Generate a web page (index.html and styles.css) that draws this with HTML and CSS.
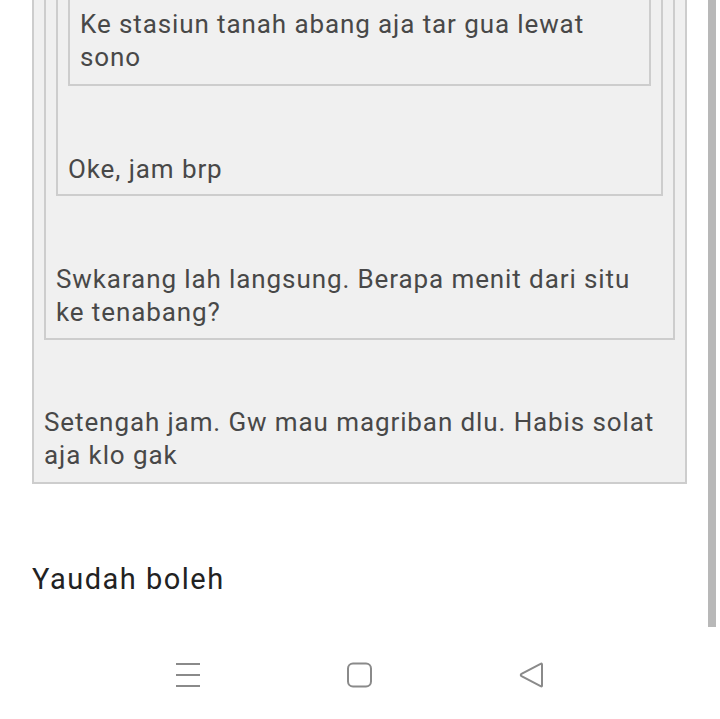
FILE: index.html
```html
<!DOCTYPE html>
<html>
<head>
<meta charset="utf-8">
<link rel="stylesheet" href="styles.css">
</head>
<body>
<div class="screen">
  <div class="viewport">
    <div class="content">
      <div class="quote q1">
        <div class="quote q2">
          <div class="quote q3">
            <div class="quote q4">
              <p class="msg">Ke stasiun tanah abang aja tar gua lewat sono</p>
            </div>
            <p class="msg spaced">Oke, jam brp</p>
          </div>
          <p class="msg spaced">Swkarang lah langsung. Berapa menit dari situ ke tenabang?</p>
        </div>
        <p class="msg spaced">Setengah jam. Gw mau magriban dlu. Habis solat aja klo gak</p>
      </div>
      <p class="reply">Yaudah boleh</p>
    </div>
    <div class="scrollbar"></div>
  </div>
  <nav class="navbar">
    <svg class="nav-icon" width="26" height="26" viewBox="0 0 26 26">
      <path d="M1 2h24M1 13h24M1 24h24" stroke="#8a8a8a" stroke-width="2" fill="none"/>
    </svg>
    <svg class="nav-icon" width="26" height="26" viewBox="0 0 26 26">
      <rect x="1" y="1.5" width="23" height="23" rx="5" stroke="#8a8a8a" stroke-width="2" fill="none"/>
    </svg>
    <svg class="nav-icon" width="26" height="26" viewBox="0 0 26 26">
      <path d="M23 2.5 L23 23.5 Q23 25 21.6 24.2 L2.5 14.2 Q1 13 2.5 11.8 L21.6 1.8 Q23 1 23 2.5 Z" stroke="#8a8a8a" stroke-width="2" fill="none" stroke-linejoin="round"/>
    </svg>
  </nav>
</div>
</body>
</html>
```
FILE: styles.css
```css
* { box-sizing: border-box; }
html, body {
  margin: 0;
  padding: 0;
  background: #ffffff;
}
.screen {
  width: 720px;
  height: 719px;
  display: flex;
  flex-direction: column;
  font-family: Roboto, "Noto Sans", sans-serif;
}
.viewport {
  height: 627px;
  display: flex;
  overflow: hidden;
}
.content {
  flex: 1;
  padding: 0 21px 0 32px;
}
.quote {
  background: #f0f0f0;
  border: 2px solid #cdcdcd;
  border-top: none;
  padding: 0 10px 10px 10px;
}
.q2 {
  padding-bottom: 9px;
}
.q3 {
  padding-bottom: 8px;
}
.q4 {
  padding-top: 8px;
  padding-bottom: 10px;
}
.msg {
  margin: 0;
  font-size: 26px;
  line-height: 33px;
  letter-spacing: 0.9px;
  color: #484848;
}
.spaced {
  margin-top: 67px;
}
.q1 > .spaced {
  margin-top: 66px;
}
.reply {
  margin: 77px 0 0 0;
  font-size: 29px;
  line-height: 36px;
  letter-spacing: 1.5px;
  color: #222222;
}
.scrollbar {
  width: 8px;
  margin-right: 4px;
  background: #b8b8b8;
}
.navbar {
  flex: 1;
  display: flex;
  align-items: center;
  padding-left: 175px;
  gap: 146px;
  padding-top: 4px;
}
.nav-icon {
  display: block;
}
```
